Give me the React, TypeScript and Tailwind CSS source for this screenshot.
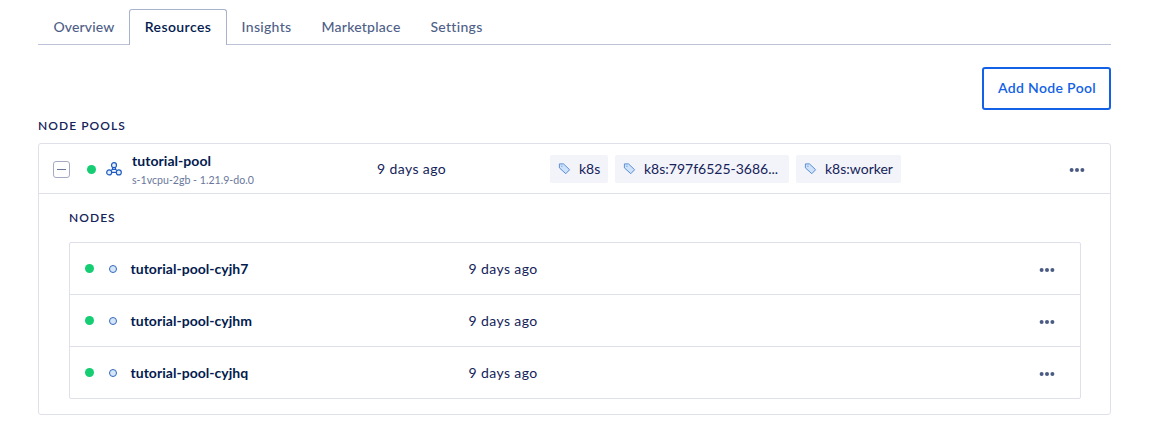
import React from "react";

const tabs = [
  { name: "Overview", box: "w-[91px]", text: "tracking-[0.15px] pl-px" },
  { name: "Resources", box: "w-[98px]", text: "tracking-[0.4px] pb-[2px]" },
  { name: "Insights", box: "w-[80px]", text: "tracking-[0.3px] pr-px" },
  { name: "Marketplace", box: "w-[109px]", text: "tracking-[0.25px] pr-px" },
  { name: "Settings", box: "w-[83px]", text: "tracking-[0.3px] pr-[2px]" },
];

const tags = [
  { name: "k8s", box: "w-[58px]" },
  { name: "k8s:797f6525-3686...", box: "w-[174px]" },
  { name: "k8s:worker", box: "w-[105px]" },
];

const nodes = ["tutorial-pool-cyjh7", "tutorial-pool-cyjhm", "tutorial-pool-cyjhq"];

function Dots() {
  return (
    <svg width="16" height="6" viewBox="0 0 16 6" fill="#4a5a82" className="mt-[2px] shrink-0">
      <circle cx="2.6" cy="3" r="2" />
      <circle cx="8" cy="3" r="2" />
      <circle cx="13.4" cy="3" r="2" />
    </svg>
  );
}

function TagIcon() {
  return (
    <svg width="13" height="13" viewBox="0 0 13 13" className="shrink-0">
      <path
        d="M1.4 1.9H5.5L11.6 7.7 7.8 11.7 1.4 5.9Z"
        fill="#cfe2fb"
        stroke="#5a8ed2"
        strokeLinejoin="round"
      />
      <circle cx="3.9" cy="4.2" r="0.7" fill="#7ba6de" />
    </svg>
  );
}

function PoolIcon() {
  return (
    <svg width="16" height="14" viewBox="0 0 16 14" fill="#e5f0ff" stroke="#1f5cc0" strokeWidth="1.2" className="shrink-0">
      <path d="M6.5 5.2v2.2L5 8.4M9.5 5.2v2.2l1.5 1M6.5 7.4h3M5.9 10.4h4.2" />
      <circle cx="8" cy="3.2" r="2.5" />
      <circle cx="3.2" cy="10.4" r="2.5" />
      <circle cx="12.8" cy="10.4" r="2.5" />
    </svg>
  );
}

export default function App() {
  return (
    <main className="h-[425px] w-[1150px] overflow-hidden bg-white pl-[38px] pr-[39px] pt-[9px] font-['Lato',sans-serif] text-[14px] text-[#14235a]">
      <nav className="flex h-9 items-stretch">
        {tabs.map((tab) => (
          <div
            key={tab.name}
            className={`${tab.box} ${tab.text} flex items-center justify-center whitespace-nowrap ${
              tab.name === "Resources"
                ? "rounded-t-[3px] border border-b-0 border-[#a9b2cd] font-semibold text-[#031b4e]"
                : "border-b border-[#bcc3d9] font-medium text-[#4f5f88]"
            }`}
          >
            {tab.name}
          </div>
        ))}
        <div className="grow border-b border-[#bcc3d9]" />
      </nav>

      <div className="mt-[22px] flex justify-end">
        <button className="h-[43px] w-[129px] rounded-[3px] border-2 border-[#1261e6] pb-[2px] pl-px text-[14px] font-semibold tracking-[0.35px] text-[#1261e6]">
          Add Node Pool
        </button>
      </div>

      <h2 className="mt-2 h-4 text-[12px] font-semibold leading-4 tracking-[1.05px] text-[#14235a]">NODE POOLS</h2>

      <section className="mt-[9px] h-[272px] rounded-[3px] border border-[#dee1ea]">
        <div className="flex h-[50px] items-center border-b border-[#dee1ea]">
          <button className="ml-[14px] mt-px flex size-[17px] items-center justify-center rounded-[3px] border border-[#a4abc2]">
            <span className="h-px w-[9px] bg-[#69779b]" />
          </button>
          <span className="ml-[17px] mr-[10px] mt-px size-[9px] rounded-full bg-[#15cd72]" />
          <PoolIcon />
          <div className="ml-[10px] w-[245px]">
            <div className="mt-[2px] text-[14px] font-bold leading-[18px] tracking-[0.05px] text-[#031b4e]">tutorial-pool</div>
            <div className="mt-[3px] text-[10.6px] leading-[15px] text-[#6a779b]">s-1vcpu-2gb - 1.21.9-do.0</div>
          </div>
          <div className="w-[173px] whitespace-nowrap tracking-[0.4px]">9 days ago</div>
          <div className="flex gap-[7px]">
            {tags.map((tag) => (
              <div
                key={tag.name}
                className={`${tag.box} flex h-7 items-center gap-[8px] whitespace-nowrap rounded-[2px] bg-[#f3f4f9] pl-2`}
              >
                <TagIcon />
                <span>{tag.name}</span>
              </div>
            ))}
          </div>
          <div className="ml-auto mr-[25px]">
            <Dots />
          </div>
        </div>

        <h3 className="ml-[30px] mt-4 h-4 text-[12px] font-semibold leading-4 tracking-[1.05px]">NODES</h3>

        <div className="ml-[30px] mr-[29px] mt-4 rounded-[2px] border border-[#dee1ea]">
          {nodes.map((node) => (
            <div key={node} className="flex h-[52px] items-center border-b border-[#dee1ea] last:h-[51px] last:border-b-0">
              <span className="ml-[15px] size-[9px] rounded-full bg-[#15cd72]" />
              <span className="ml-[15px] size-[8px] rounded-full border border-[#3468bb] bg-[#d5e6fb]" />
              <div className="ml-[13.5px] w-[338px] pb-px font-bold tracking-[0.03px] text-[#031b4e]">{node}</div>
              <div className="pb-px tracking-[0.4px]">9 days ago</div>
              <div className="ml-auto mr-[25px]">
                <Dots />
              </div>
            </div>
          ))}
        </div>
      </section>
    </main>
  );
}
